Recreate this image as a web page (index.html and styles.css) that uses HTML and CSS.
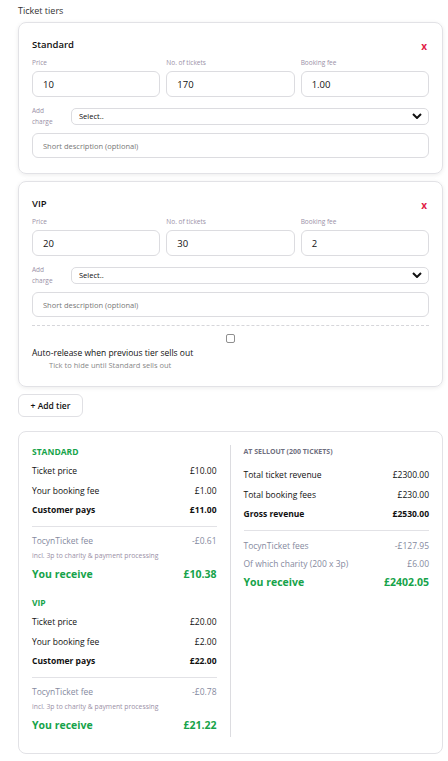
FILE: index.html
```html
<!DOCTYPE html>
<html>
<head>
<meta charset="utf-8">
<link rel="stylesheet" href="styles.css">
</head>
<body>
<div class="page">
  <div class="section-title">Ticket tiers</div>

  <div class="tier">
    <div class="tier-head">
      <div class="tier-name">Standard</div>
      <div class="remove">x</div>
    </div>
    <div class="fields">
      <div class="field"><div class="label">Price</div><div class="input">10</div></div>
      <div class="field"><div class="label">No. of tickets</div><div class="input">170</div></div>
      <div class="field"><div class="label">Booking fee</div><div class="input">1.00</div></div>
    </div>
    <div class="charge-row">
      <div class="charge-label">Add<br>charge</div>
      <div class="select"><span>Select..</span>
        <svg class="chev" viewBox="0 0 10 6" width="10" height="6"><path d="M1 1 L5 5 L9 1" fill="none" stroke="#111" stroke-width="2"/></svg>
      </div>
    </div>
    <div class="desc">Short description (optional)</div>
  </div>

  <div class="tier">
    <div class="tier-head">
      <div class="tier-name">VIP</div>
      <div class="remove">x</div>
    </div>
    <div class="fields">
      <div class="field"><div class="label">Price</div><div class="input">20</div></div>
      <div class="field"><div class="label">No. of tickets</div><div class="input">30</div></div>
      <div class="field"><div class="label">Booking fee</div><div class="input">2</div></div>
    </div>
    <div class="charge-row">
      <div class="charge-label">Add<br>charge</div>
      <div class="select"><span>Select..</span>
        <svg class="chev" viewBox="0 0 10 6" width="10" height="6"><path d="M1 1 L5 5 L9 1" fill="none" stroke="#111" stroke-width="2"/></svg>
      </div>
    </div>
    <div class="desc">Short description (optional)</div>
    <div class="release">
      <div class="checkbox"></div>
      <div class="release-title">Auto-release when previous tier sells out</div>
      <div class="release-sub">Tick to hide until Standard sells out</div>
    </div>
  </div>

  <button class="add-tier">+ Add tier</button>

  <div class="summary">
    <div class="col left">
      <div class="group">
        <div class="group-title">STANDARD</div>
        <div class="row"><span>Ticket price</span><span>£10.00</span></div>
        <div class="row"><span>Your booking fee</span><span>£1.00</span></div>
        <div class="row bold"><span>Customer pays</span><span>£11.00</span></div>
        <div class="divider"></div>
        <div class="row muted"><span>TocynTicket fee</span><span>-£0.61</span></div>
        <div class="note">incl. 3p to charity &amp; payment processing</div>
        <div class="row receive"><span>You receive</span><span>£10.38</span></div>
      </div>
      <div class="group">
        <div class="group-title">VIP</div>
        <div class="row"><span>Ticket price</span><span>£20.00</span></div>
        <div class="row"><span>Your booking fee</span><span>£2.00</span></div>
        <div class="row bold"><span>Customer pays</span><span>£22.00</span></div>
        <div class="divider"></div>
        <div class="row muted"><span>TocynTicket fee</span><span>-£0.78</span></div>
        <div class="note">incl. 3p to charity &amp; payment processing</div>
        <div class="row receive"><span>You receive</span><span>£21.22</span></div>
      </div>
    </div>
    <div class="col right">
      <div class="sell-title">AT SELLOUT (200 TICKETS)</div>
      <div class="row"><span>Total ticket revenue</span><span>£2300.00</span></div>
      <div class="row"><span>Total booking fees</span><span>£230.00</span></div>
      <div class="row bold"><span>Gross revenue</span><span>£2530.00</span></div>
      <div class="divider"></div>
      <div class="row muted"><span>TocynTicket fees</span><span>-£127.95</span></div>
      <div class="row muted"><span>Of which charity (200 x 3p)</span><span>£6.00</span></div>
      <div class="row receive"><span>You receive</span><span>£2402.05</span></div>
    </div>
  </div>
</div>
</body>
</html>
```

FILE: styles.css
```css
* { box-sizing: border-box; }
html, body { margin: 0; padding: 0; background: #fff; }
body {
  font-family: "Open Sans", "Noto Sans", sans-serif;
  color: #111;
  font-size: 9px;
}
.page {
  width: 448px;
  padding: 4px 5px 0 18px;
}
.section-title {
  font-size: 9px;
  line-height: 14px;
  color: #333;
  margin-bottom: 4px;
}
.tier {
  border: 1px solid #e2e2e6;
  border-radius: 8px;
  box-shadow: 0 1px 4px rgba(0,0,0,0.08);
  padding: 13px 13px 15px 13px;
  margin-bottom: 7px;
}
.tier-head {
  display: flex;
  justify-content: space-between;
  align-items: center;
  height: 16px;
}
.tier-name {
  font-size: 9.5px;
  font-weight: 600;
}
.remove {
  color: #e11d48;
  font-weight: 700;
  font-size: 10px;
  padding-top: 4px;
  margin-right: 2px;
}
.fields {
  display: grid;
  grid-template-columns: 1fr 1fr 1fr;
  gap: 6px;
  margin-top: 6px;
}
.label {
  font-size: 6.5px;
  line-height: 9px;
  color: #9a90a6;
  margin-bottom: 4px;
}
.input {
  height: 26px;
  border: 1px solid #dcdce0;
  border-radius: 6px;
  padding-left: 10px;
  display: flex;
  align-items: center;
  font-size: 9.5px;
}
.charge-row {
  display: flex;
  align-items: center;
  margin-top: 8px;
  gap: 11px;
}
.charge-label {
  font-size: 6.5px;
  line-height: 11px;
  color: #9a90a6;
  width: 28px;
}
.select {
  flex: 1;
  height: 17px;
  border: 1px solid #dcdce0;
  border-radius: 5px;
  display: flex;
  align-items: center;
  justify-content: space-between;
  padding: 0 6px 0 7px;
  font-size: 7.5px;
}
.desc {
  margin-top: 6px;
  height: 25px;
  border: 1px solid #dcdce0;
  border-radius: 6px;
  padding-left: 10px;
  display: flex;
  align-items: center;
  font-size: 7.5px;
  color: #777;
}
.release {
  margin-top: 8px;
  border-top: 1px dashed #d6d6da;
  padding-top: 8px;
}
.checkbox {
  width: 9px;
  height: 9px;
  border: 1px solid #8f8f8f;
  border-radius: 2px;
  margin: 0 auto;
}
.release-title {
  font-size: 8.5px;
  font-weight: 500;
  line-height: 13px;
  margin-top: 3px;
}
.release-sub {
  font-size: 7.5px;
  color: #888;
  padding-left: 17px;
  margin-top: 1px;
  line-height: 11px;
}
.add-tier {
  font-family: "Open Sans", "Noto Sans", sans-serif;
  font-size: 8.5px;
  font-weight: 600;
  color: #111;
  background: #fff;
  border: 1px solid #e0e0e4;
  border-radius: 6px;
  height: 23px;
  width: 65px;
  padding: 0;
  margin-top: 0;
  display: block;
}
.summary {
  margin-top: 14px;
  border: 1px solid #e2e2e6;
  border-radius: 8px;
  padding: 13px 13px 15px 13px;
  display: grid;
  grid-template-columns: 1fr 1fr;
  column-gap: 0;
}
.col.left { padding-right: 13px; border-right: 1px solid #dcdce0; margin-bottom: 1px; }
.col.right { padding-left: 13px; }
.group + .group { margin-top: 10px; }
.group-title {
  font-size: 8.5px;
  font-weight: 700;
  color: #16a34a;
  line-height: 14px;
  margin-bottom: 2px;
}
.sell-title {
  font-size: 7px;
  font-weight: 700;
  color: #707080;
  line-height: 14px;
  margin-bottom: 6px;
}
.row {
  display: flex;
  justify-content: space-between;
  font-size: 8.5px;
  line-height: 19.5px;
}
.row.bold { font-weight: 700; }
.row.muted { color: #868aa0; }
.divider {
  height: 1px;
  background: #e2e2e6;
  margin: 6px 0 4px;
}
.note {
  font-size: 6.8px;
  color: #9a90a6;
  line-height: 12px;
}
.row.receive {
  color: #16a34a;
  font-weight: 700;
  font-size: 10.5px;
  line-height: 24px;
}
.right .divider { margin-bottom: 6px; }
.right .row.muted { line-height: 18px; }
.right .row.receive { line-height: 18px; }
```
